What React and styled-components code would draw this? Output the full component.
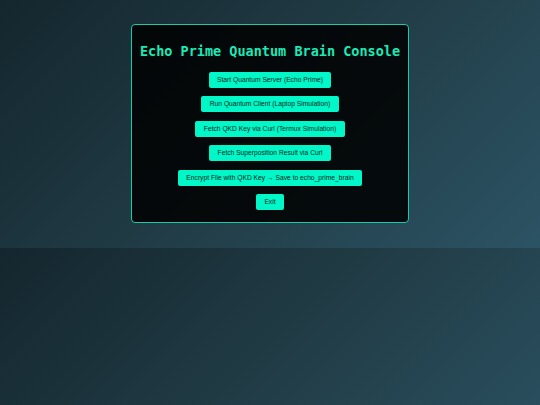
import React from "react";
import styled, { createGlobalStyle } from "styled-components";

const GlobalStyle = createGlobalStyle`
    body {
        margin: 0;
        padding: 24px 0 25px;
        background: linear-gradient(135deg, #14262e, #213c46, #2c5364);
        font-family: "Liberation Sans", Arial, sans-serif;
    }
`;

const Console = styled.div`
    box-sizing: border-box;
    width: 278px;
    margin: 0 auto;
    padding: 18px 10px 12px;
    background: rgba(0, 0, 0, 0.85);
    border: 1px solid #1fc9a6;
    border-radius: 4px;
    display: flex;
    flex-direction: column;
    align-items: center;
`;

const Title = styled.h1`
    margin: 0 0 12.7px;
    font-family: "DejaVu Sans Mono", monospace;
    font-weight: bold;
    font-size: 13.5px;
    line-height: 16px;
    color: #1de9b6;
    white-space: nowrap;
`;

const Actions = styled.div`
    display: flex;
    flex-direction: column;
    align-items: center;
    gap: 8.5px;
`;

const ActionButton = styled.button`
    box-sizing: border-box;
    height: 16px;
    padding: 0 8.5px;
    border: none;
    border-radius: 2px;
    background: #00f7c8;
    color: #0b1f1a;
    font-family: "Liberation Sans", Arial, sans-serif;
    font-size: 6.7px;
    line-height: 16px;
    cursor: pointer;
    white-space: nowrap;
`;

const actions = [
    "Start Quantum Server (Echo Prime)",
    "Run Quantum Client (Laptop Simulation)",
    "Fetch QKD Key via Curl (Termux Simulation)",
    "Fetch Superposition Result via Curl",
    "Encrypt File with QKD Key \u2192 Save to echo_prime_brain",
    "Exit",
];

const App = () => {
    return (
        <>
            <GlobalStyle />
            <Console>
                <Title>Echo Prime Quantum Brain Console</Title>
                <Actions>
                    {actions.map((label) => (
                        <ActionButton key={label}>{label}</ActionButton>
                    ))}
                </Actions>
            </Console>
        </>
    );
};

export default App;
